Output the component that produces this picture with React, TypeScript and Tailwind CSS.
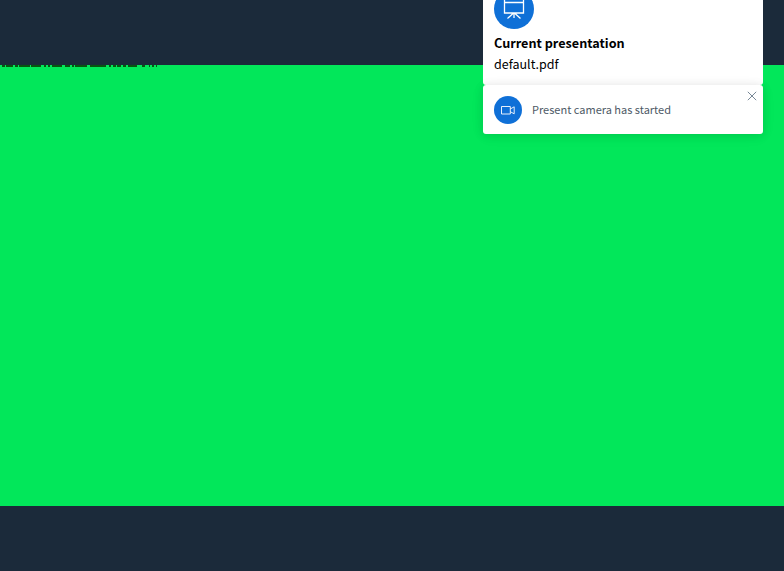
const marks: [number, number][] = [
  [2, 3], [6, 7], [15, 3], [19, 11], [31, 10], [44, 2], [48, 2], [52, 10], [65, 5], [72, 2],
  [75, 12], [90, 16], [109, 2], [113, 3], [117, 4], [123, 3], [128, 9],
  [142, 3], [149, 1], [152, 2], [156, 1],
];

function PresentationIcon() {
  return (
    <svg width="40" height="40" viewBox="0 0 40 40" fill="none" stroke="white" strokeWidth="1.3">
      <path d="M10.5 9.5h19M10.5 13.5h19M10.5 9.5v14.5h19V9.5M20 24v5M19 24.5l-5.5 5M21 24.5l5.5 5" />
    </svg>
  );
}

function CameraIcon() {
  return (
    <svg width="28" height="28" viewBox="0 0 28 28" fill="none" stroke="white" strokeWidth="0.9">
      <path d="M7.5 10.5h8.8v7.5h-8.8zM16.3 13l3.9-2.2v7L16.3 15.7" />
    </svg>
  );
}

export default function App() {
  return (
    <div className="relative h-[571px] w-[784px] overflow-hidden bg-[#1b2a3a] pt-[65px] font-['Noto_Sans_CJK_SC',sans-serif]">
      <main className="h-[441px] bg-[#02e75a]">
        <svg width="160" height="2" className="block" fill="#075510" shapeRendering="crispEdges">
          {marks.map(([x, width]) => (
            <rect key={x} x={x} y="0" width={width} height="2" />
          ))}
        </svg>
      </main>
      <div className="absolute top-0 left-[483px] w-[280px]">
        <section className="relative h-[85px] overflow-hidden rounded-b-[3px] bg-white pl-[11px]">
          <div className="-mt-[11px] h-10 w-10 rounded-full bg-[#0f70d7]">
            <PresentationIcon />
          </div>
          <h1 className="mt-[3px] whitespace-nowrap text-[12.65px] leading-[21px] font-bold text-black">Current presentation</h1>
          <p className="whitespace-nowrap text-[12.5px] leading-[21px] text-black">default.pdf</p>
        </section>
        <section className="relative flex h-[49px] items-center rounded-[3px] bg-white pl-[11px] shadow-[0_1px_10px_rgba(0,0,0,0.1),0_2px_15px_rgba(0,0,0,0.05)]">
          <div className="h-7 w-7 rounded-full bg-[#0f70d7]">
            <CameraIcon />
          </div>
          <p className="mb-[2px] ml-[10px] whitespace-nowrap text-[11px] leading-4 text-[#4e5a66]">Present camera has started</p>
          <button aria-label="Close" className="absolute top-[6px] right-[6px]">
            <svg width="10" height="10" viewBox="0 0 10 10" stroke="#788796" strokeWidth="1" className="block">
              <path d="M.8.8l8.4 8.4M9.2.8L.8 9.2" />
            </svg>
          </button>
        </section>
      </div>
    </div>
  );
}
